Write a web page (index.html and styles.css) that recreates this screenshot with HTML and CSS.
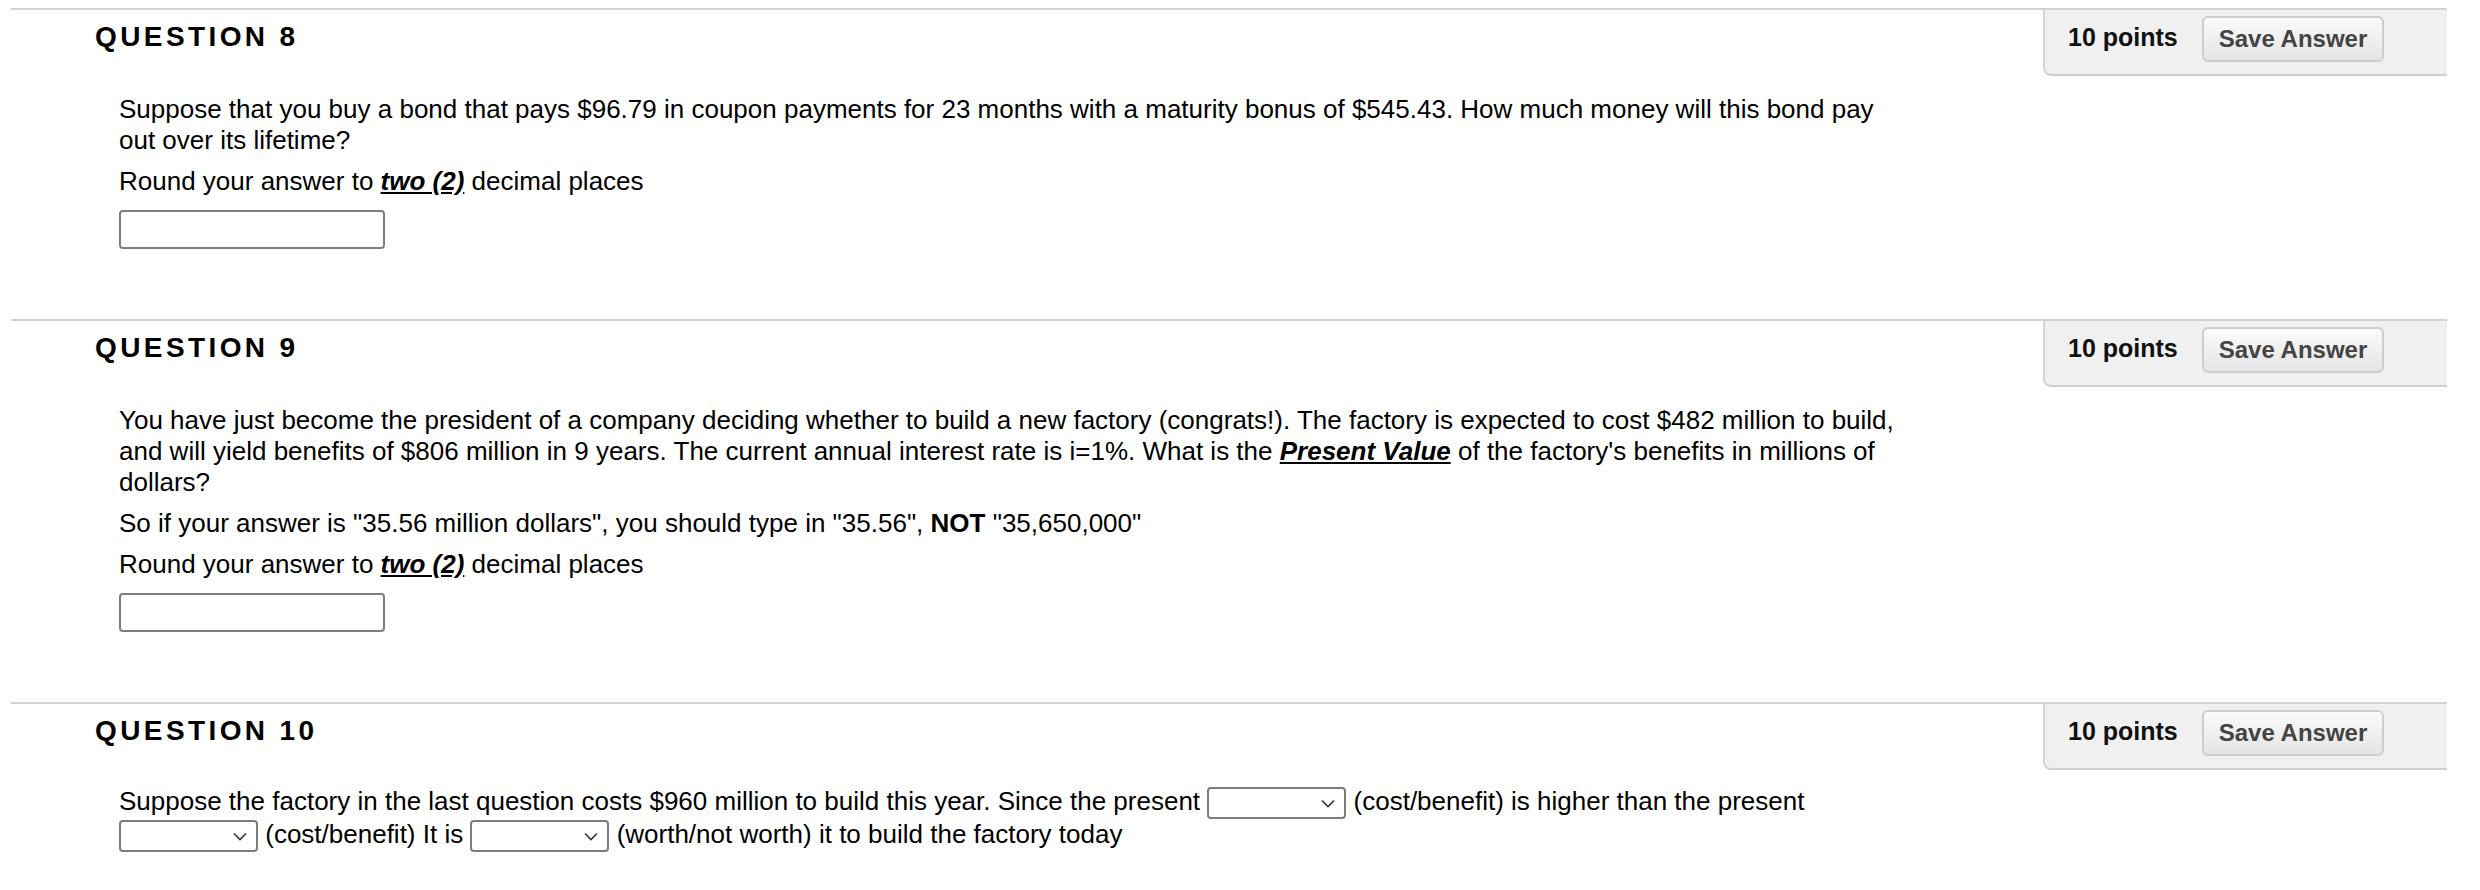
FILE: index.html
```html
<!DOCTYPE html>
<html lang="en">
<head>
<meta charset="utf-8">
<title>Questions</title>
<link rel="stylesheet" href="styles.css">
</head>
<body>
<div class="page">
  <section class="question">
    <div class="q-head">
      <h3 class="q-title">QUESTION 8</h3>
      <div class="q-meta">
        <span class="points">10 points</span>
        <button class="save-btn" type="button">Save Answer</button>
      </div>
    </div>
    <div class="q-body">
      <p>Suppose that you buy a bond that pays $96.79 in coupon payments for 23 months with a maturity bonus of $545.43. How much money will this bond pay out over its lifetime?</p>
      <p>Round your answer to <span class="emph">two (2)</span> decimal places</p>
      <input class="answer" type="text">
    </div>
  </section>

  <section class="question">
    <div class="q-head">
      <h3 class="q-title">QUESTION 9</h3>
      <div class="q-meta">
        <span class="points">10 points</span>
        <button class="save-btn" type="button">Save Answer</button>
      </div>
    </div>
    <div class="q-body">
      <p>You have just become the president of a company deciding whether to build a new factory (congrats!). The factory is expected to cost $482 million to build, and will yield benefits of $806 million in 9 years. The current annual interest rate is i=1%. What is the <span class="emph">Present Value</span> of the factory's benefits in millions of dollars?</p>
      <p>So if your answer is "35.56 million dollars", you should type in "35.56", <b>NOT</b> "35,650,000"</p>
      <p>Round your answer to <span class="emph">two (2)</span> decimal places</p>
      <input class="answer" type="text">
    </div>
  </section>

  <section class="question">
    <div class="q-head">
      <h3 class="q-title">QUESTION 10</h3>
      <div class="q-meta">
        <span class="points">10 points</span>
        <button class="save-btn" type="button">Save Answer</button>
      </div>
    </div>
    <div class="q-body fill-body">
      <p class="fill">Suppose the factory in the last question costs $960 million to build this year. Since the present <span class="dd"><select class="dd-select"><option></option></select><svg class="chev" width="14" height="9" viewBox="0 0 14 9"><path d="M1 1.5 L7 7.5 L13 1.5" fill="none" stroke="#333" stroke-width="1.6"/></svg></span> (cost/benefit) is higher than the present <span class="dd"><select class="dd-select"><option></option></select><svg class="chev" width="14" height="9" viewBox="0 0 14 9"><path d="M1 1.5 L7 7.5 L13 1.5" fill="none" stroke="#333" stroke-width="1.6"/></svg></span> (cost/benefit) It is <span class="dd"><select class="dd-select"><option></option></select><svg class="chev" width="14" height="9" viewBox="0 0 14 9"><path d="M1 1.5 L7 7.5 L13 1.5" fill="none" stroke="#333" stroke-width="1.6"/></svg></span> (worth/not worth) it to build the factory today</p>
    </div>
  </section>
</div>
</body>
</html>
```
FILE: styles.css
```css
body {
  margin: 0;
  background: #ffffff;
  color: #000000;
  font-family: "Liberation Sans", Arial, Helvetica, sans-serif;
}

.page {
  margin-left: 11px;
  width: 2436px;
  padding-top: 8px;
}

.question {
  border-top: 2px solid #d2d2d2;
  margin-bottom: 70px;
}

.question:last-child {
  margin-bottom: 0;
}

.q-head {
  display: flex;
  justify-content: space-between;
  align-items: flex-start;
  height: 66px;
}

.q-title {
  margin: 0;
  padding: 10px 0 0 84px;
  font-size: 28px;
  line-height: 34px;
  letter-spacing: 3.4px;
  font-weight: bold;
  color: #000;
}

.q-meta {
  box-sizing: border-box;
  width: 404px;
  height: 66px;
  background: #f0f0f0;
  border-left: 2px solid #d3d3d3;
  border-bottom: 2px solid #cfcfcf;
  border-bottom-left-radius: 8px;
  display: flex;
  align-items: flex-start;
  gap: 24px;
  padding: 6px 0 0 23px;
}

.points {
  font-size: 25px;
  font-weight: bold;
  color: #111;
  line-height: 42px;
}

.save-btn {
  box-sizing: border-box;
  height: 46px;
  padding: 0 15px;
  border: 2px solid #cdcdcd;
  border-radius: 6px;
  background: linear-gradient(#fbfbfb, #e4e4e4);
  font-family: "Liberation Sans", Arial, sans-serif;
  font-weight: bold;
  font-size: 24px;
  color: #444;
}

.q-body {
  padding: 18px 0 0 108px;
  width: 1790px;
}

.q-body.fill-body {
  padding-top: 16px;
}

.q-body p {
  margin: 0 0 10px;
  font-size: 26px;
  line-height: 31px;
}

.q-body p.fill {
  margin: 0;
}

.emph {
  font-weight: bold;
  font-style: italic;
  text-decoration: underline;
}

.answer {
  display: block;
  box-sizing: border-box;
  width: 266px;
  height: 39px;
  margin: 13px 0 0;
  border: 2px solid #7d7d7d;
  border-radius: 4px;
  background: #fff;
}

.dd {
  position: relative;
  display: inline-block;
  vertical-align: middle;
  width: 139px;
  height: 32px;
}

.dd-select {
  appearance: none;
  -webkit-appearance: none;
  display: block;
  box-sizing: border-box;
  width: 139px;
  height: 32px;
  margin: 0;
  border: 2px solid #7d7d7d;
  border-radius: 4px;
  background: #fff;
}

.chev {
  position: absolute;
  right: 11px;
  top: 12px;
  pointer-events: none;
}
```
